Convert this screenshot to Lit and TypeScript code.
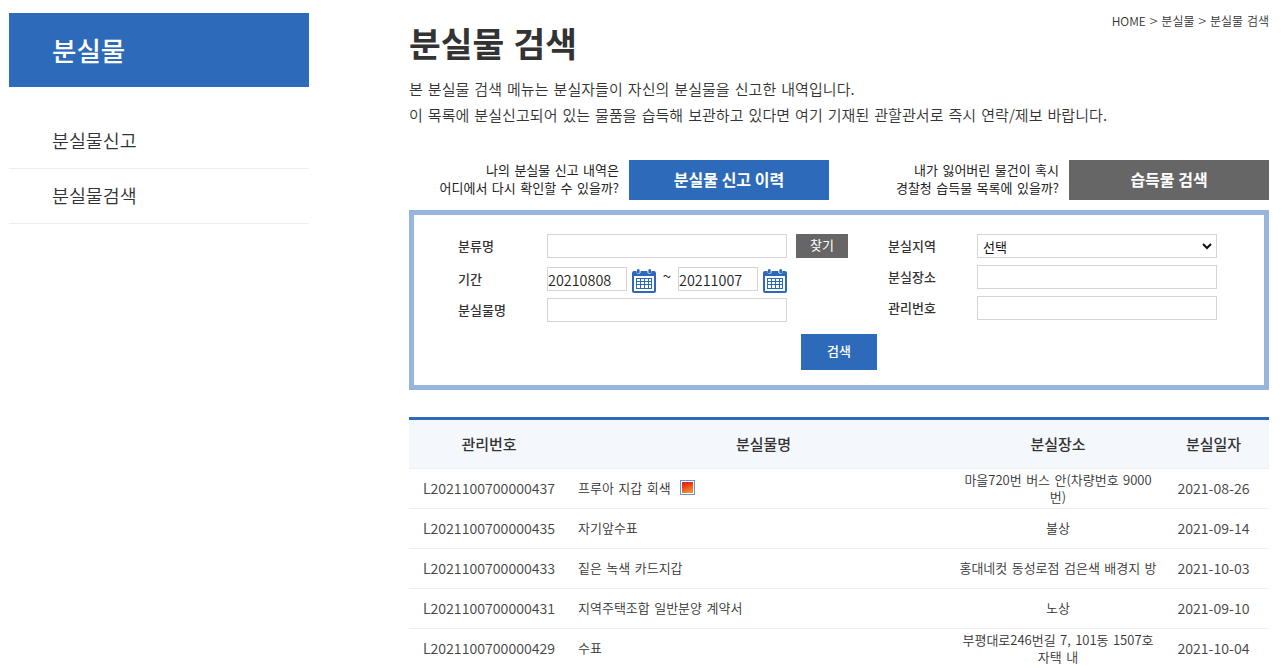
import { LitElement, html, css, svg } from "lit";
import { customElement } from "lit/decorators.js";

const rows = [
  { id: "L2021100700000437", name: "프루아 지갑 회색", img: true, place: "마을720번 버스 안(차량번호 9000번)", date: "2021-08-26" },
  { id: "L2021100700000435", name: "자기앞수표", img: false, place: "불상", date: "2021-09-14" },
  { id: "L2021100700000433", name: "짙은 녹색 카드지갑", img: false, place: "홍대네컷 동성로점 검은색 배경지 방", date: "2021-10-03" },
  { id: "L2021100700000431", name: "지역주택조합 일반분양 계약서", img: false, place: "노상", date: "2021-09-10" },
  { id: "L2021100700000429", name: "수표", img: false, place: "부평대로246번길 7, 101동 1507호 자택 내", date: "2021-10-04" },
];

const calendar = svg`<svg class="cal" width="24" height="24" viewBox="0 0 24 24" aria-hidden="true">
  <path fill="#2d69b8" d="M2 2h2.600v1.600a2.200 2.200 0 0 0 4 0V2h6.800v1.600a2.200 2.200 0 0 0 4 0V2H22a2 2 0 0 1 2 2v18a2 2 0 0 1-2 2H2a2 2 0 0 1-2-2V4a2 2 0 0 1 2-2z"/>
  <rect x="5" y="0" width="2.600" height="4.500" rx="1.300" fill="#2d69b8"/>
  <rect x="16.400" y="0" width="2.600" height="4.500" rx="1.300" fill="#2d69b8"/>
  <rect x="2" y="7" width="20" height="15" fill="#fff"/>
  <path fill="#2d69b8" d="M4 9h16v11H4z"/>
  <path fill="#fff" d="M5 10h3v2H5zM9 10h3v2H9zM13 10h3v2h-3zM17 10h2v2h-2zM5 13h3v2H5zM9 13h3v2H9zM13 13h3v2h-3zM17 13h2v2h-2zM5 16h3v3H5zM9 16h3v3H9zM13 16h3v3h-3zM17 16h2v3h-2z"/>
</svg>`;

@customElement("app-root")
export class AppRoot extends LitElement {
  static styles = css`
    :host {
      display: block;
      height: 668px;
      overflow: hidden;
      background: #fff;
      color: #333;
      font-family: "Noto Sans CJK KR", "Noto Sans", sans-serif;
      font-size: 14px;
      word-spacing: 0.11em;
    }
    * { box-sizing: border-box; }
    .page { display: flex; padding-left: 9px; padding-top: 13px; width: 1269px; }
    .side { width: 300px; flex: none; margin-right: 100px; }
    .side-title {
      height: 74px; background: #2d6ab9; color: #fff; font-size: 26.500px; font-weight: 500;
      padding-left: 43px; line-height: 74px;
    }
    .side ul { list-style: none; margin: 26px 0 0; padding: 0; }
    .side li {
      height: 55px; border-bottom: 1px solid #eee; font-size: 18.400px; padding-left: 43px;
      line-height: 53px; font-weight: 350;
    }
    .side li:first-child { height: 56px; line-height: 55px; }
    .main { flex: 1; min-width: 0; position: relative; margin-top: -13px; }
    .crumb { position: absolute; right: 0; top: 12px; font-size: 12px; line-height: 18px; font-weight: 350; word-spacing: 0.09em; }
    .crumb span { font-size: 15px; font-weight: 200; line-height: 18px; vertical-align: -1px; }
    h1 { margin: 0; padding-top: 17px; font-size: 34.500px; line-height: 51px; font-weight: 700; }
    .desc { margin: 8px 0 0; font-size: 15px; line-height: 26px; font-weight: 350; letter-spacing: 0.060px; }
    .links { display: flex; gap: 20px; margin-top: 32px; }
    .link { width: 420px; display: flex; align-items: center; justify-content: flex-end; gap: 10px; }
    .link p { margin: 0; padding-bottom: 3px; text-align: right; font-size: 13px; line-height: 18px; color: #222; }
    .btn-lg {
      width: 200px; height: 40px; border: 0; color: #fff; font: inherit; font-size: 16px; font-weight: 700;
      background: #2d6ab9; padding: 0 0 2px;
    }
    .btn-lg.gray { background: #666; }
    .form {
      margin-top: 10px; height: 180px; border: 5px solid #97b5dd; padding: 19px 0 0 44px;
      display: flex; flex-direction: column;
    }
    .cols { display: flex; }
    .col-l { width: 430px; }
    .col-r { width: 340px; }
    .row { display: flex; align-items: center; height: 24px; font-size: 13px; }
    .row label { width: 89px; flex: none; font-weight: 500; color: #333; line-height: 20px; }
    .col-l .date { height: 26px; margin: 9px 0 5px; align-items: flex-start; }
    .col-l .date label { line-height: 24px; }
    .col-r .row + .row { margin-top: 7px; }
    input, select {
      height: 24px; width: 240px; border: 1px solid #d5d5d5; background: #fff; padding: 0;
      font: inherit; color: #222; outline: none; border-radius: 0; margin: 0;
    }
    input.d { width: 80px; font-size: 14.400px; font-weight: 350; }
    .cal { display: block; margin: 2px 0 0 5px; flex: none; }
    .tilde { width: 22px; flex: none; text-align: center; font-size: 15px; line-height: 18px; color: #222; }
    .find {
      margin-left: 9px; width: 52px; height: 24px; background: #666; color: #fff; border: 0; padding: 0 0 3px;
      font: inherit; font-size: 13px;
    }
    .sel { position: relative; width: 240px; height: 24px; }
    .sel select { appearance: none; padding-left: 5px; display: block; color: #111; font-size: 13px; }
    .chev { position: absolute; right: 5px; top: 9px; pointer-events: none; }
    .submit {
      align-self: flex-start; margin: 12px 0 0 343px; width: 76px; height: 36px; border: 0; background: #2d6ab9; color: #fff;
      font: inherit; font-size: 13px; font-weight: 500; padding: 0 0 3px;
    }
    table {
      width: 860px; margin-top: 27px; border-collapse: collapse; table-layout: fixed; border-top: 3px solid #2d6ab9;
      font-size: 13px;
    }
    col.c1 { width: 160px; } col.c2 { width: 389px; } col.c3 { width: 200px; } col.c4 { width: 111px; }
    th { height: 50px; background: #f4f7fb; font-size: 15px; font-weight: 500; padding: 0 0 2px; border-bottom: 1px solid #eee; }
    td { height: 40px; padding: 0; text-align: center; border-bottom: 1px solid #eee; line-height: 16.500px; font-weight: 350; }
    td.num { font-size: 14.200px; color: #444; }
    td.name { text-align: left; padding-left: 9px; }
    .thumb {
      display: inline-block; width: 15px; height: 15px; margin-left: 9px; vertical-align: -2px;
      border: 1px solid #6a97c9; box-shadow: inset 0 0 0 1px #fff;
      background: linear-gradient(160deg, #e8281a 25%, #f9a92e 95%);
    }
  `;

  render() {
    return html`<div class="page">
      <aside class="side">
        <div class="side-title">분실물</div>
        <ul><li>분실물신고</li><li>분실물검색</li></ul>
      </aside>
      <main class="main">
        <div class="crumb">HOME <span>&gt;</span> 분실물 <span>&gt;</span> 분실물 검색</div>
        <h1>분실물 검색</h1>
        <p class="desc">본 분실물 검색 메뉴는 분실자들이 자신의 분실물을 신고한 내역입니다.<br />이 목록에 분실신고되어 있는 물품을 습득해 보관하고 있다면 여기 기재된 관할관서로 즉시 연락/제보 바랍니다.</p>
        <div class="links">
          <div class="link"><p>나의 분실물 신고 내역은<br />어디에서 다시 확인할 수 있을까?</p><button class="btn-lg">분실물 신고 이력</button></div>
          <div class="link"><p>내가 잃어버린 물건이 혹시<br />경찰청 습득물 목록에 있을까?</p><button class="btn-lg gray">습득물 검색</button></div>
        </div>
        <div class="form">
          <div class="cols">
            <div class="col-l">
              <div class="row"><label>분류명</label><input /><button class="find">찾기</button></div>
              <div class="row date"><label>기간</label><input class="d" value="20210808" />${calendar}<span class="tilde">~</span><input class="d" value="20211007" />${calendar}</div>
              <div class="row"><label>분실물명</label><input /></div>
            </div>
            <div class="col-r">
              <div class="row"><label>분실지역</label><div class="sel"><select><option>선택</option></select>
                <svg class="chev" width="10" height="7" viewBox="0 0 10 7"><path d="M1 1l4 4 4-4" fill="none" stroke="#111" stroke-width="2"/></svg></div></div>
              <div class="row"><label>분실장소</label><input /></div>
              <div class="row"><label>관리번호</label><input /></div>
            </div>
          </div>
          <button class="submit">검색</button>
        </div>
        <table>
          <colgroup><col class="c1" /><col class="c2" /><col class="c3" /><col class="c4" /></colgroup>
          <thead><tr><th>관리번호</th><th>분실물명</th><th>분실장소</th><th>분실일자</th></tr></thead>
          <tbody>
            ${rows.map((r) => html`<tr>
              <td class="num">${r.id}</td>
              <td class="name">${r.name}${r.img ? html`<span class="thumb"></span>` : ""}</td>
              <td class="place">${r.place}</td>
              <td class="num">${r.date}</td>
            </tr>`)}
          </tbody>
        </table>
      </main>
    </div>`;
  }
}
